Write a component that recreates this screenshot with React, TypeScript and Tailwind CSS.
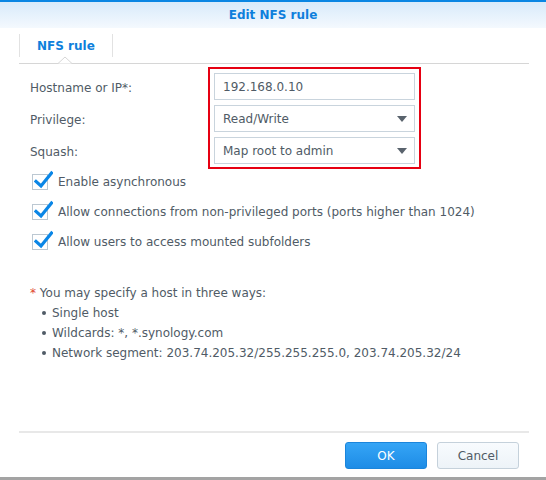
import React from "react";

const font = { fontFamily: '"DejaVu Sans", Verdana, sans-serif' };

const Check = () => (
  <span className="relative inline-block h-[16px] w-[16px] shrink-0 border border-[#bcc8d2] bg-white">
    <svg
      className="absolute left-[1px] top-[-5px]"
      width="19"
      height="19"
      viewBox="0 0 19 19"
    >
      <path d="M2 11.5 L7 16 L17.5 3" fill="none" stroke="#0a86e6" strokeWidth="3.2" strokeLinecap="square" />
    </svg>
  </span>
);

const Arrow = () => (
  <svg width="10" height="6" viewBox="0 0 10 6" className="shrink-0">
    <path d="M0 0 H10 L5 6 Z" fill="#59636d" />
  </svg>
);

const rows = [
  { label: "Hostname or IP*:", value: "192.168.0.10", select: false },
  { label: "Privilege:", value: "Read/Write", select: true },
  { label: "Squash:", value: "Map root to admin", select: true },
];

const checks = [
  "Enable asynchronous",
  "Allow connections from non-privileged ports (ports higher than 1024)",
  "Allow users to access mounted subfolders",
];

export default function App() {
  return (
    <div
      className="flex h-[480px] w-[546px] flex-col overflow-hidden bg-white text-[12px] text-[#505b66]"
      style={font}
    >
      <div className="flex h-[28px] shrink-0 items-center justify-center border-t-2 border-[#0a86e3] bg-gradient-to-b from-[#d8eafa] to-[#f4f9fe] text-[12px] font-bold text-[#0e7fdc]">
        Edit NFS rule
      </div>

      <div className="flex flex-1 flex-col pl-[19px] pr-[17px]">
        <div className="relative mt-[6px] flex h-[30px] border-b border-[#d6d6d6]">
          <div className="mb-[6px] flex items-center border-x border-[#e2e2e2] px-[17px] text-[12px] font-bold text-[#0e7fdc]">
            NFS rule
          </div>
          <svg className="absolute bottom-[-1px] left-[39px]" width="14" height="8" viewBox="0 0 14 8">
            <path d="M0 7.5 L7 1 L14 7.5" fill="#fff" stroke="#d6d6d6" strokeWidth="1" />
          </svg>
        </div>

        <div className="mt-[3px] flex">
          <div className="flex w-[189px] flex-col gap-[5px] pl-[11px] pt-[7px]">
            {rows.map((r) => (
              <div key={r.label} className="flex h-[27px] items-center">
                {r.label}
              </div>
            ))}
          </div>
          <div className="flex w-[213px] flex-col gap-[5px] border-2 border-[#e60012] px-[4px] pb-[3px] pt-[4px]">
            {rows.map((r) => (
              <div
                key={r.label}
                className="flex h-[27px] items-center justify-between border border-[#c9d4dd] bg-white pl-[8px] pr-[7px]"
              >
                <span>{r.value}</span>
                {r.select && <Arrow />}
              </div>
            ))}
          </div>
        </div>

        <div className="mt-[5px] flex flex-col gap-[14px] pl-[13px]">
          {checks.map((c) => (
            <div key={c} className="flex h-[16px] items-center gap-[10px]">
              <Check />
              <span>{c}</span>
            </div>
          ))}
        </div>

        <div className="mt-[35px] flex flex-col gap-[4px] pl-[11px] leading-[16px]">
          <div>
            <span className="text-[#e0462f]">*</span> You may specify a host in three ways:
          </div>
          {[
            "Single host",
            "Wildcards: *, *.synology.com",
            "Network segment: 203.74.205.32/255.255.255.0, 203.74.205.32/24",
          ].map((t) => (
            <div key={t} className="flex items-center pl-[12px]">
              <span className="mr-[6px] inline-block h-[4px] w-[4px] rounded-full bg-[#505b66]" />
              {t}
            </div>
          ))}
        </div>

        <div className="mt-auto border-t-2 border-[#e8e8e8]" />
        <div className="flex justify-end gap-[10px] pb-[8px] pr-[10px] pt-[9px]">
          <button className="h-[27px] w-[82px] rounded-[3px] border border-[#1b85db] bg-gradient-to-b from-[#35a5f6] to-[#1d8ce6] text-[12px] text-white">
            OK
          </button>
          <button className="h-[27px] w-[82px] rounded-[3px] border border-[#c5d1db] bg-gradient-to-b from-[#f8fbfe] to-[#edf3f8] text-[12px] text-[#505b66]">
            Cancel
          </button>
        </div>
      </div>
      <div className="h-[3px] shrink-0 bg-[#a3a3a3]" />
    </div>
  );
}
